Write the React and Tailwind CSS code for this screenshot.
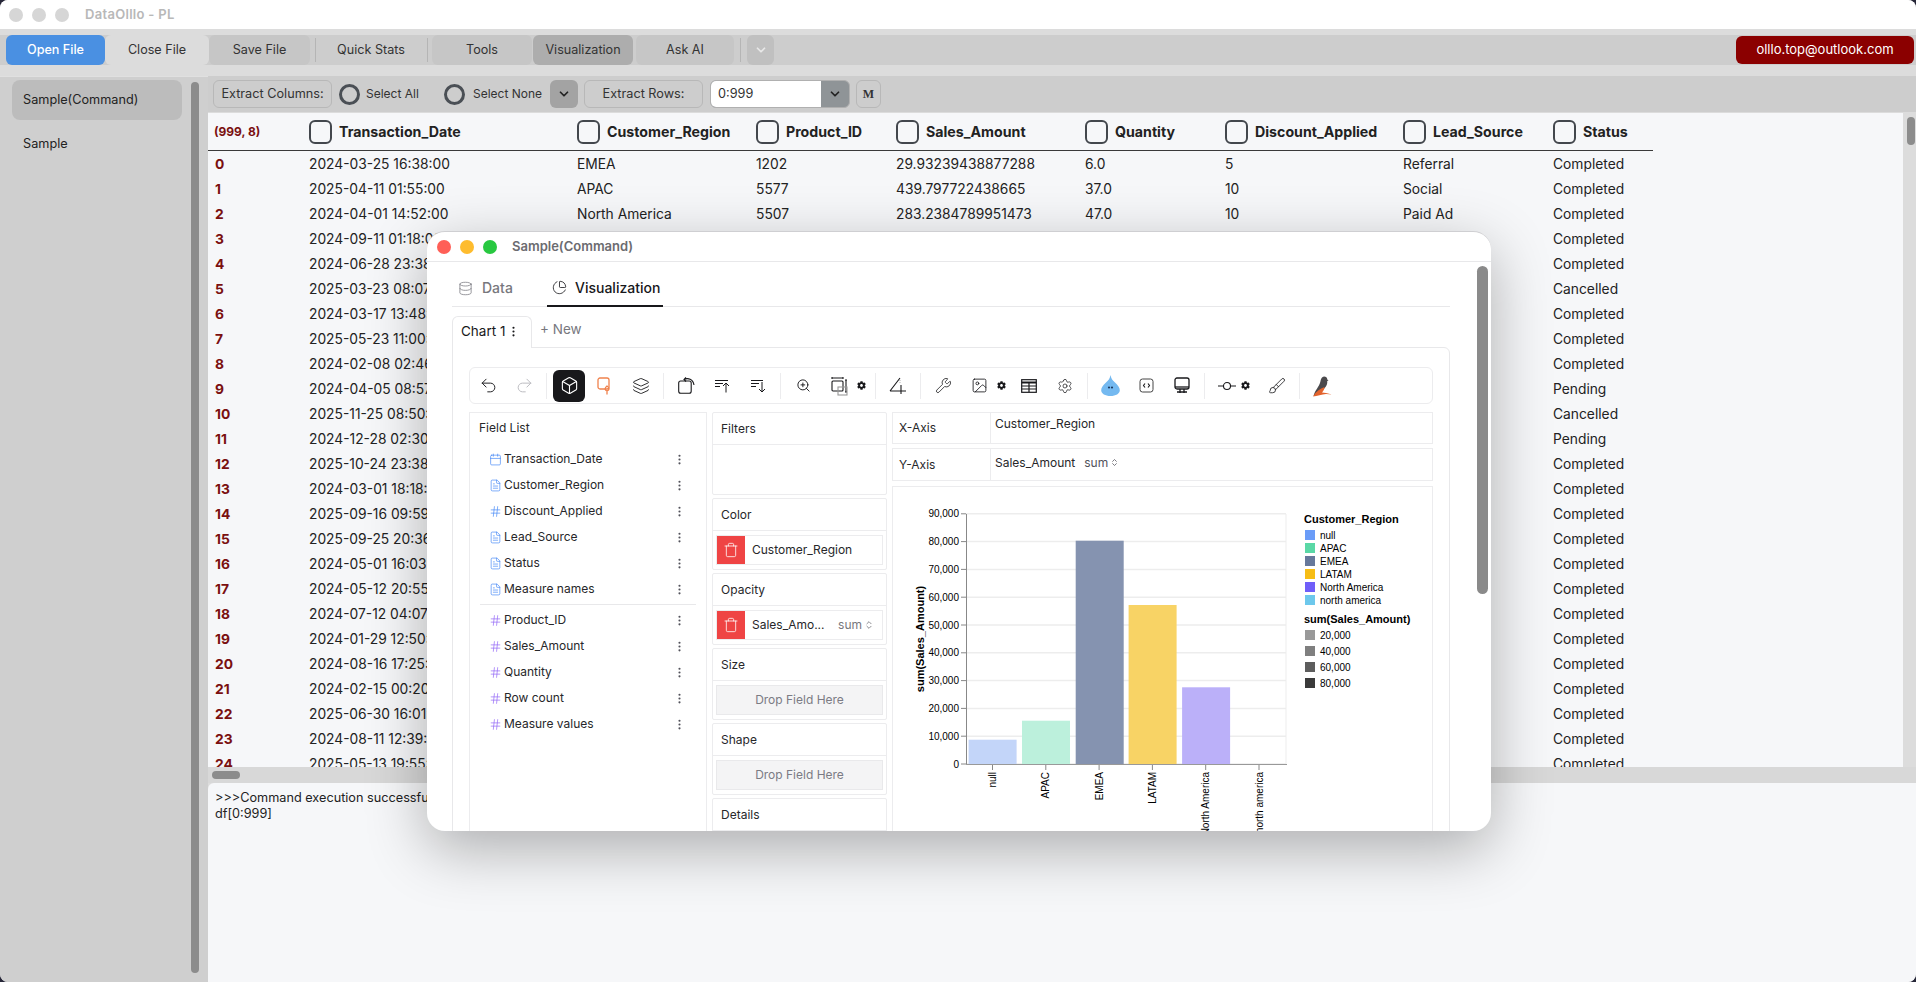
import { Undo2, Redo2, Box, Layers, ZoomIn, Wrench, Image, Settings, Brush, Database, ChartPie, Calendar, FileText, Hash, EllipsisVertical, Trash, ChevronsUpDown, ChevronDown } from "lucide-react";
import { FaCog } from "react-icons/fa";

const rows = [
  ["2024-03-25 16:38:00", "EMEA", "1202", "29.93239438877288", "6.0", "5", "Referral", "Completed"],
  ["2025-04-11 01:55:00", "APAC", "5577", "439.797722438665", "37.0", "10", "Social", "Completed"],
  ["2024-04-01 14:52:00", "North America", "5507", "283.2384789951473", "47.0", "10", "Paid Ad", "Completed"],
  ["2024-09-11 01:18:00", "", "", "", "", "", "", "Completed"],
  ["2024-06-28 23:38:00", "", "", "", "", "", "", "Completed"],
  ["2025-03-23 08:07:00", "", "", "", "", "", "", "Cancelled"],
  ["2024-03-17 13:48:00", "", "", "", "", "", "", "Completed"],
  ["2025-05-23 11:00:00", "", "", "", "", "", "", "Completed"],
  ["2024-02-08 02:46:00", "", "", "", "", "", "", "Completed"],
  ["2024-04-05 08:57:00", "", "", "", "", "", "", "Pending"],
  ["2025-11-25 08:50:00", "", "", "", "", "", "", "Cancelled"],
  ["2024-12-28 02:30:00", "", "", "", "", "", "", "Pending"],
  ["2025-10-24 23:38:00", "", "", "", "", "", "", "Completed"],
  ["2024-03-01 18:18:00", "", "", "", "", "", "", "Completed"],
  ["2025-09-16 09:59:00", "", "", "", "", "", "", "Completed"],
  ["2025-09-25 20:36:00", "", "", "", "", "", "", "Completed"],
  ["2024-05-01 16:03:00", "", "", "", "", "", "", "Completed"],
  ["2024-05-12 20:55:00", "", "", "", "", "", "", "Completed"],
  ["2024-07-12 04:07:00", "", "", "", "", "", "", "Completed"],
  ["2024-01-29 12:50:00", "", "", "", "", "", "", "Completed"],
  ["2024-08-16 17:25:00", "", "", "", "", "", "", "Completed"],
  ["2024-02-15 00:20:00", "", "", "", "", "", "", "Completed"],
  ["2025-06-30 16:01:00", "", "", "", "", "", "", "Completed"],
  ["2024-08-11 12:39:00", "", "", "", "", "", "", "Completed"],
  ["2025-05-13 19:55:00", "", "", "", "", "", "", "Completed"],
];

const columns = ["Transaction_Date", "Customer_Region", "Product_ID", "Sales_Amount", "Quantity", "Discount_Applied", "Lead_Source", "Status"];
const gridCols = "grid grid-cols-[101px_268px_179px_140px_189px_140px_178px_150px_100px]";

const fieldsTop = [
  ["date", "Transaction_Date"],
  ["text", "Customer_Region"],
  ["num", "Discount_Applied"],
  ["text", "Lead_Source"],
  ["text", "Status"],
  ["text", "Measure names"],
];
const fieldsBottom = [
  ["num2", "Product_ID"],
  ["num2", "Sales_Amount"],
  ["num2", "Quantity"],
  ["num2", "Row count"],
  ["num2", "Measure values"],
];

const ToolBtn = ({ className = "", children }) => (
  <div className={`h-[30px] rounded-md flex items-center justify-center text-[12.6px] text-[#333] ${className}`}>{children}</div>
);

const Sep = () => <div className="w-px h-[24px] bg-[#b5b5b5]" />;

const Radio = () => <div className="w-[21px] h-[21px] rounded-full border-[3px] border-[#4a4f55] bg-transparent" />;

const Check = () => <div className="w-[23px] h-[24px] rounded-[6px] border-[2.5px] border-[#43474d] shrink-0" />;

const FieldRow = ({ type, name }) => (
  <div className="h-[26px] flex items-center pl-[19px] text-[12px] text-[#27272a]">
    <span className="w-[15px] flex justify-start">
      {type === "date" && <Calendar size={13} strokeWidth={1.2} className="text-[#3b82f6]" />}
      {type === "text" && <FileText size={13} strokeWidth={1.2} className="text-[#3b82f6]" />}
      {type === "num" && <Hash size={13} strokeWidth={1.2} className="text-[#3b82f6]" />}
      {type === "num2" && <Hash size={13} strokeWidth={1.2} className="text-[#8b5cf6]" />}
    </span>
    <span className="flex-1">{name}</span>
    <EllipsisVertical size={13} className="text-[#52525b] mr-[20px]" />
  </div>
);

const Section = ({ title, children }) => (
  <div className="border border-[#ececee] rounded-[2px]">
    <div className="h-[32px] flex items-center px-[8px] text-[12px] text-[#27272a] border-b border-[#ececee]">{title}</div>
    {children}
  </div>
);

const Pill = ({ children }) => (
  <div className="mx-[3px] my-[4px] h-[30px] flex items-center border border-[#ececee]">
    <div className="w-[28px] h-full bg-[#ef4444] flex items-center justify-center shrink-0">
      <Trash size={16} strokeWidth={1.2} className="text-white" />
    </div>
    {children}
  </div>
);

const Drop = () => (
  <div className="mx-[3px] my-[4px] h-[30px] flex items-center justify-center bg-[#f4f4f5] border border-[#e9e9eb] text-[12px] text-[#7b7b84]">Drop Field Here</div>
);

const Icon = ({ children }) => <div className="w-[36px] h-full flex items-center justify-center shrink-0 text-[#18181b]">{children}</div>;
const BarSep = () => (
  <div className="w-[9px] h-full flex items-center justify-center shrink-0">
    <div className="w-px h-[26px] bg-[#ececee]" />
  </div>
);
const Gear = () => (
  <div className="w-[14px] h-full flex items-center shrink-0">
    <FaCog size={9} className="text-[#18181b]" />
  </div>
);

const ChartToolbar = () => (
  <div className="w-[964px] h-[37px] border border-[#ececee] rounded-md flex items-center">
    <Icon><Undo2 size={19} strokeWidth={1.2} /></Icon>
    <Icon><Redo2 size={19} strokeWidth={1.2} className="text-[#b8b8be]" /></Icon>
    <BarSep />
    <Icon>
      <div className="w-[32px] h-[32px] rounded-md bg-[#18181b] flex items-center justify-center">
        <Box size={19} strokeWidth={1.4} className="text-white" />
      </div>
    </Icon>
    <Icon>
      <svg width="16" height="18" viewBox="0 0 16 18" fill="none" stroke="#f0824d" strokeWidth="1.3">
        <rect x="1" y="1" width="11" height="11" rx="2" />
        <path d="M10 9c-2.500 2-2.500 4 0 5 2.500-1 3-3 0-5zM10 14v3.500" />
      </svg>
    </Icon>
    <Icon><Layers size={18} strokeWidth={1.2} /></Icon>
    <BarSep />
    <Icon>
      <svg width="17" height="17" viewBox="0 0 17 17" fill="none" stroke="currentColor" strokeWidth="1.1">
        <rect x="0.7" y="4" width="12.5" height="12.3" rx="2" />
        <path d="M6 2.500C10 0.500 15 2 16 8M8 0.500 6 2.500 8 4.500" />
      </svg>
    </Icon>
    <Icon>
      <svg width="15" height="14" viewBox="0 0 15 14" fill="none" stroke="currentColor" strokeWidth="1">
        <path d="M0 1.500h13M0 4.500h8M0 7.500h5M11 13.500V4M8 7l3-3 3 3" />
      </svg>
    </Icon>
    <Icon>
      <svg width="15" height="14" viewBox="0 0 15 14" fill="none" stroke="currentColor" strokeWidth="1">
        <path d="M0 1.500h12M0 4.500h8M0 7.500h5M11 3v10M8 10l3 3 3-3" />
      </svg>
    </Icon>
    <BarSep />
    <Icon><ZoomIn size={15} strokeWidth={1.5} /></Icon>
    <Icon>
      <svg width="17" height="20" viewBox="0 0 17 20" fill="none" stroke="currentColor" strokeWidth="1.1">
        <path d="M1 2h11M1 1v2M12 1v2" />
        <rect x="1" y="5" width="11" height="10" rx="1" />
        <path d="M15 4v12M14 4h2M14 16h2" />
        <rect x="7" y="11" width="9" height="8" stroke="#999" />
      </svg>
    </Icon>
    <Gear />
    <BarSep />
    <Icon>
      <svg width="18" height="18" viewBox="0 0 18 18" fill="none" stroke="currentColor" strokeWidth="1.1">
        <path d="M1 14 L11 1 M1 14 H17" />
        <path d="M11 3v4" stroke="#bbb" strokeDasharray="1 1" />
        <path d="M12 8v9" />
      </svg>
    </Icon>
    <BarSep />
    <Icon><Wrench size={17} strokeWidth={1.1} /></Icon>
    <Icon><Image size={17} strokeWidth={1.2} /></Icon>
    <Gear />
    <Icon>
      <svg width="16" height="14" viewBox="0 0 16 14" fill="none" stroke="currentColor" strokeWidth="1.2">
        <rect x="0.7" y="0.7" width="14.6" height="12.6" />
        <path d="M0.700 3.500h14.600" strokeWidth="2" />
        <path d="M0.700 7h14.600M0.700 10h14.600M8 4v9" />
      </svg>
    </Icon>
    <Icon><Settings size={16} strokeWidth={1.1} /></Icon>
    <BarSep />
    <Icon>
      <svg width="21" height="21" viewBox="0 0 21 21">
        <path d="M10.500 0c.6 3.500 1.800 5 4.500 7.500 3 2.800 4.800 5 4.800 7.700 0 3.300-4 5.800-9.300 5.800s-9.300-2.500-9.300-5.800c0-2.700 1.800-4.900 4.800-7.700C8.700 5 9.900 3.500 10.500 0z" fill="#74b9f0" />
        <circle cx="9" cy="12.500" r="1.100" fill="#1e3a5f" />
        <circle cx="12" cy="12.500" r="1.100" fill="#1e3a5f" />
      </svg>
    </Icon>
    <Icon>
      <svg width="15" height="15" viewBox="0 0 15 15" fill="none" stroke="currentColor" strokeWidth="1">
        <rect x="1" y="1" width="13" height="13" rx="2.500" stroke="#444" />
        <path d="M6 5.500 4.500 7.500l1.500 2M9 5.500l1.500 2L9 9.500" strokeWidth="1.1" />
      </svg>
    </Icon>
    <Icon>
      <svg width="16" height="17" viewBox="0 0 16 17" fill="none" stroke="currentColor" strokeWidth="1.3">
        <rect x="1" y="1" width="14" height="11" rx="2" />
        <path d="M1 10h14" />
        <path d="M3 15h10M6 12v4M10 12v4" />
      </svg>
    </Icon>
    <BarSep />
    <Icon>
      <svg width="18" height="10" viewBox="0 0 18 10" fill="none" stroke="currentColor" strokeWidth="1.100">
        <circle cx="9" cy="5" r="3.500" />
        <path d="M0 5h5.500M12.500 5H18" />
      </svg>
    </Icon>
    <div className="w-[14px] h-full flex items-center shrink-0 -ml-[4px] mr-[4px]">
      <FaCog size={9} className="text-[#18181b]" />
    </div>
    <Icon><Brush size={18} strokeWidth={1.1} /></Icon>
    <BarSep />
    <Icon>
      <svg width="22" height="22" viewBox="0 0 22 22">
        <path d="M13 1.500c2 0 3.200 1.200 3.300 3l1.200 1-1.300.6c.5 4-2 7.500-6 10L2.500 21C4 15 8 12 9.300 7c.5-3.200 1.700-5.500 3.700-5.500z" fill="#4b4a4d" />
        <path d="M2 21.500c3-5 7-8 11.500-9.500 0 2.500-1.500 4.500-2.500 5.500l4 .5 6 1.500-6-.5c-4 0-9 2.500-13 2.500z" fill="#e2632d" />
      </svg>
    </Icon>
  </div>
);

const bars = [
  { x: 968.6, top: 739.7, fill: "#c3d5f9" },
  { x: 1022, top: 720.7, fill: "#bcf0dc" },
  { x: 1075.7, top: 540.7, fill: "#8593b0" },
  { x: 1128.6, top: 605, fill: "#f8d365" },
  { x: 1182.1, top: 687.3, fill: "#bbb0f9" },
];

const xLabels = ["null", "APAC", "EMEA", "LATAM", "North America", "north america"];
const yLabels = ["0", "10,000", "20,000", "30,000", "40,000", "50,000", "60,000", "70,000", "80,000", "90,000"];
const legend1 = [["null", "#6a9cf8"], ["APAC", "#5ad8a6"], ["EMEA", "#66789b"], ["LATAM", "#f6bd16"], ["North America", "#6f5ef9"], ["north america", "#6dc8ec"]];
const legend2 = [["20,000", "#999999"], ["40,000", "#7f7f7f"], ["60,000", "#5d5d5d"], ["80,000", "#3a3a3a"]];

const Chart = () => (
  <svg width="539" height="344" viewBox="893 487 539 344" className="block" fontFamily="Liberation Sans, sans-serif">
    {yLabels.map((l, i) => {
      const y = 764 - i * 27.8;
      return (
        <g key={l}>
          <line x1="966" x2="1286" y1={y} y2={y} stroke="#ededed" strokeWidth="1.5" />
          <line x1="961" x2="966" y1={y} y2={y} stroke="#888" />
          <text x="959" y={y + 3.5} fontSize="10" textAnchor="end" fill="#000">{l}</text>
        </g>
      );
    })}
    <line x1="1286" x2="1286" y1="514" y2="764" stroke="#ededed" />
    {bars.map((b) => (
      <rect key={b.x} x={b.x} y={b.top} width="48" height={764 - b.top} fill={b.fill} />
    ))}
    <line x1="966.5" x2="966.5" y1="514" y2="765" stroke="#888" />
    <line x1="966" x2="1287" y1="764.5" y2="764.5" stroke="#999" />
    {xLabels.map((l, i) => {
      const x = 992.5 + i * 53.3;
      return (
        <g key={l}>
          <line x1={x} x2={x} y1="765" y2="770" stroke="#888" />
          <text transform={`translate(${x + 3.5} 772) rotate(-90)`} fontSize="10" textAnchor="end" fill="#000">{l}</text>
        </g>
      );
    })}
    <text transform="translate(924 639) rotate(-90)" fontSize="11" fontWeight="bold" textAnchor="middle" fill="#000">sum(Sales_Amount)</text>
    <text x="1304" y="523" fontSize="11" fontWeight="bold" fill="#000">Customer_Region</text>
    {legend1.map(([l, c], i) => (
      <g key={l}>
        <rect x="1305" y={530 + i * 13} width="10" height="10" fill={c} />
        <text x="1320" y={538.5 + i * 13} fontSize="10" fill="#000">{l}</text>
      </g>
    ))}
    <text x="1304" y="623" fontSize="11" fontWeight="bold" fill="#000">sum(Sales_Amount)</text>
    {legend2.map(([l, c], i) => (
      <g key={l}>
        <rect x="1305" y={630 + i * 16} width="10" height="10" fill={c} />
        <text x="1320" y={638.5 + i * 16} fontSize="10" fill="#000">{l}</text>
      </g>
    ))}
  </svg>
);

const ChartWindow = () => (
  <div className="absolute left-[427px] top-[231px] w-[1064px] h-[600px] bg-white rounded-[18px] overflow-hidden shadow-[0_18px_60px_rgba(0,0,0,0.3)] border-t border-[#cfcfd2]">
    <div className="h-[30px] flex items-center border-b border-[#e8e8ea] pl-[10px]">
      <span className="w-[14px] h-[14px] rounded-full bg-[#ff5f57]" />
      <span className="w-[14px] h-[14px] rounded-full bg-[#febc2e] ml-[9px]" />
      <span className="w-[14px] h-[14px] rounded-full bg-[#28c840] ml-[9px]" />
      <span className="ml-[15px] text-[13px] font-semibold text-[#6b6b70]">Sample(Command)</span>
    </div>
    <div className="pl-[25px] w-[1023px]">
      <div className="h-[45px] flex border-b border-[#e8e8ea] text-sm font-medium">
        <div className="w-[95px] flex items-center pt-[8px] pl-[6px] text-[#77777d] gap-[9px]">
          <Database size={15} strokeWidth={1.2} /> Data
        </div>
        <div className="w-[116px] flex items-center pt-[8px] pl-[5px] gap-[8px] text-[#18181b] border-b-2 border-[#18181b] -mb-px">
          <ChartPie size={15} strokeWidth={1.3} /> Visualization
        </div>
      </div>
      <div className="flex h-[40px] items-end">
        <div className="w-[80px] h-[32px] -mb-px pb-[3px] border border-b-0 border-[#e8e8ea] rounded-t-md flex items-center pl-[8px] text-[13.5px] text-[#18181b] gap-[2px] bg-white relative">
          Chart 1 <EllipsisVertical size={13} />
        </div>
        <div className="h-[32px] pb-[4px] flex items-center pl-[8px] text-[13.5px] text-[#77777d]">+ New</div>
      </div>
      <div className="border border-[#e8e8ea] rounded-tr-md pl-[16px] pt-[19px] h-[500px]">
        <ChartToolbar />
        <div className="flex gap-[5px] mt-[8px]">
          <div className="w-[238px] border border-[#ececee] h-[430px]">
            <div className="h-[30px] flex items-center pl-[9px] text-[12px] text-[#27272a]">Field List</div>
            <div className="mt-[3px]">
              {fieldsTop.map(([t, n]) => <FieldRow key={n} type={t} name={n} />)}
            </div>
            <div className="h-px bg-[#e8e8ea] mx-[10px] my-[2px]" />
            <div className="mt-[1px]">
              {fieldsBottom.map(([t, n]) => <FieldRow key={n} type={t} name={n} />)}
            </div>
          </div>
          <div className="w-[175px] flex flex-col gap-[3px]">
            <Section title="Filters"><div className="h-[49px]" /></Section>
            <Section title="Color">
              <Pill><span className="pl-[7px] text-[12px] text-[#27272a]">Customer_Region</span></Pill>
            </Section>
            <Section title="Opacity">
              <Pill>
                <span className="pl-[7px] text-[12px] text-[#27272a] flex-1">Sales_Amo...</span>
                <span className="text-[12px] text-[#77777d]">sum</span>
                <ChevronsUpDown size={10} className="text-[#77777d] mr-[8px] ml-[2px]" />
              </Pill>
            </Section>
            <Section title="Size"><Drop /></Section>
            <Section title="Shape"><Drop /></Section>
            <Section title="Details"><div className="h-[60px]" /></Section>
          </div>
          <div className="w-[541px] flex flex-col gap-[4px]">
            <div className="h-[32px] border border-[#ececee] flex text-[12px] text-[#27272a]">
              <div className="w-[98px] border-r border-[#ececee] flex items-center pl-[6px]">X-Axis</div>
              <div className="pl-[4px] pt-[2px]">Customer_Region</div>
            </div>
            <div className="h-[33px] border border-[#ececee] flex text-[12px] text-[#27272a]">
              <div className="w-[98px] border-r border-[#ececee] flex items-center pl-[6px]">Y-Axis</div>
              <div className="pl-[4px] flex items-center -mt-[4px]">
                Sales_Amount
                <span className="ml-[9px] text-[#52525b]">sum</span>
                <ChevronsUpDown size={9} className="text-[#52525b] ml-[2px]" />
              </div>
            </div>
            <div className="border border-[#ececee] mt-[1px]"><Chart /></div>
          </div>
        </div>
      </div>
    </div>
    <div className="absolute left-[1050px] top-[34px] w-[11px] h-[328px] rounded-full bg-[#8a8a8a]" />
  </div>
);

export default function App() {
  return (
    <div className="w-[1916px] h-[982px] bg-[#262638]">
      <div className="relative w-[1916px] h-[982px] rounded-[8px] flex flex-col overflow-hidden bg-[#dcdcdc] font-[Inter,sans-serif]">
        {/* title bar */}
        <div className="h-[29px] bg-white flex items-center pl-[9px] shrink-0">
          <span className="w-[14px] h-[14px] rounded-full bg-[#d6d6d6]" />
          <span className="w-[14px] h-[14px] rounded-full bg-[#d6d6d6] ml-[9px]" />
          <span className="w-[14px] h-[14px] rounded-full bg-[#d6d6d6] ml-[9px]" />
          <span className="ml-[16px] text-[13px] font-semibold tracking-[0.3px] text-[#b8b8b8]">DataOlllo - PL</span>
        </div>

        {/* main toolbar */}
        <div className="h-[47px] pt-[6px] shrink-0">
          <div className="h-[30px] bg-[#cdcdcd] flex items-center pl-[6px]">
            <ToolBtn className="w-[99px] bg-[#4a90e2] !text-white font-medium">Open File</ToolBtn>
            <ToolBtn className="w-[104px] bg-[#dcdcdc]">Close File</ToolBtn>
            <ToolBtn className="w-[101px] bg-[#c6c6c6]">Save File</ToolBtn>
            <div className="w-[10px] flex justify-center"><Sep /></div>
            <ToolBtn className="w-[102px]">Quick Stats</ToolBtn>
            <div className="w-[10px] flex justify-center"><Sep /></div>
            <ToolBtn className="w-[100px] bg-[#c6c6c6]">Tools</ToolBtn>
            <ToolBtn className="w-[100px] ml-[1px] bg-[#adadad]">Visualization</ToolBtn>
            <ToolBtn className="w-[98px] ml-[3px] bg-[#c6c6c6]">Ask AI</ToolBtn>
            <div className="w-[13px] flex justify-center"><Sep /></div>
            <ToolBtn className="w-[27px] bg-[#c0c0c0]"><ChevronDown size={14} strokeWidth={3} className="text-[#e8e8e8]" /></ToolBtn>
            <div className="ml-auto mr-[2px] w-[178px] h-[28px] rounded-md bg-[#8b0000] flex items-center justify-center text-[13px] text-white">olllo.top@outlook.com</div>
          </div>
        </div>

        <div className="flex-1 flex min-h-0">
          {/* sidebar */}
          <div className="w-[208px] shrink-0 relative pl-[12px] pt-[3px] bg-[#cfcfcf] border-t border-[#e0e0e0]">
            <div className="w-[170px] h-[40px] rounded-lg bg-[#bcbcbc] flex items-center pl-[11px] text-[12.7px] text-[#222]">Sample(Command)</div>
            <div className="h-[44px] flex items-center pl-[11px] text-[12.7px] text-[#222] mt-[2px]">Sample</div>
            <div className="absolute left-[191px] top-[5px] bottom-[9px] w-[8px] rounded-full bg-[#8c8c8c]" />
          </div>

          {/* main column */}
          <div className="flex-1 min-w-0 flex flex-col">
            <div className="h-[36px] shrink-0 bg-[#cdcdcd] flex items-center pl-[5px] text-[12.7px] text-[#333]">
              <div className="w-[119px] h-[28px] border border-[#b8b8b8] rounded-md flex items-center justify-center">Extract Columns:</div>
              <div className="ml-[7px]"><Radio /></div>
              <span className="ml-[6px] w-[78px] text-[12px]">Select All</span>
              <Radio />
              <span className="ml-[8px] w-[77px] text-[12px]">Select None</span>
              <div className="w-[28px] h-[28px] rounded-md bg-[#a3a3a3] flex items-center justify-center"><ChevronDown size={14} strokeWidth={3} className="text-[#222]" /></div>
              <div className="ml-[6px] w-[119px] h-[28px] border border-[#b8b8b8] rounded-md flex items-center justify-center">Extract Rows:</div>
              <div className="ml-[7px] w-[140px] h-[28px] rounded-md bg-[#8f9497] flex overflow-hidden border border-[#b0b0b0]">
                <div className="w-[110px] bg-white flex items-center pl-[7px] text-[#333]">0:999</div>
                <div className="flex-1 flex items-center justify-center"><ChevronDown size={14} strokeWidth={3} className="text-[#222]" /></div>
              </div>
              <div className="ml-[6px] w-[25px] h-[28px] border border-[#b8b8b8] rounded-md flex items-center justify-center font-['Liberation_Serif',serif] font-bold text-[12px]">M</div>
            </div>

            <div className="h-px shrink-0" />

            <div className="h-[654px] shrink-0 flex">
              <div className="w-[1695px] bg-[#f6f7f9] overflow-hidden">
                <div className={`${gridCols} w-[1445px] h-[38px] items-center border-b border-[#3a3a3a] text-[14.2px] font-bold text-[#222]`}>
                  <div className="pl-[6px] text-[12px] text-[#7a1010]">(999, 8)</div>
                  {columns.map((c) => (
                    <div key={c} className="flex items-center gap-[7px]">
                      <Check />
                      {c}
                    </div>
                  ))}
                </div>
                <div className="pt-[1px]">
                  {rows.map((r, i) => (
                    <div key={i} className={`${gridCols} w-[1445px] h-[25px] items-center text-[13.8px] text-[#222]`}>
                      <div className="pl-[7px] font-bold text-[#7a1010]">{i}</div>
                      {r.map((v, j) => <div key={j}>{v}</div>)}
                    </div>
                  ))}
                </div>
              </div>
              <div className="flex-1 relative">
                <div className="absolute left-[4px] top-[4px] w-[8px] h-[28px] rounded-full bg-[#8c8c8c]" />
              </div>
            </div>

            <div className="h-[16px] shrink-0 relative bg-[#d8d8d8]">
              <div className="absolute left-[4px] top-[4px] w-[28px] h-[8px] rounded-full bg-[#8c8c8c]" />
            </div>

            <div className="flex-1 bg-[#f6f7f9] rounded-tl-md px-[7px] pt-[7px] text-[12.7px] leading-[16px] text-[#222]">
              <div>&gt;&gt;&gt;Command execution successful</div>
              <div>df[0:999]</div>
            </div>
          </div>
        </div>

        <ChartWindow />
      </div>
    </div>
  );
}
